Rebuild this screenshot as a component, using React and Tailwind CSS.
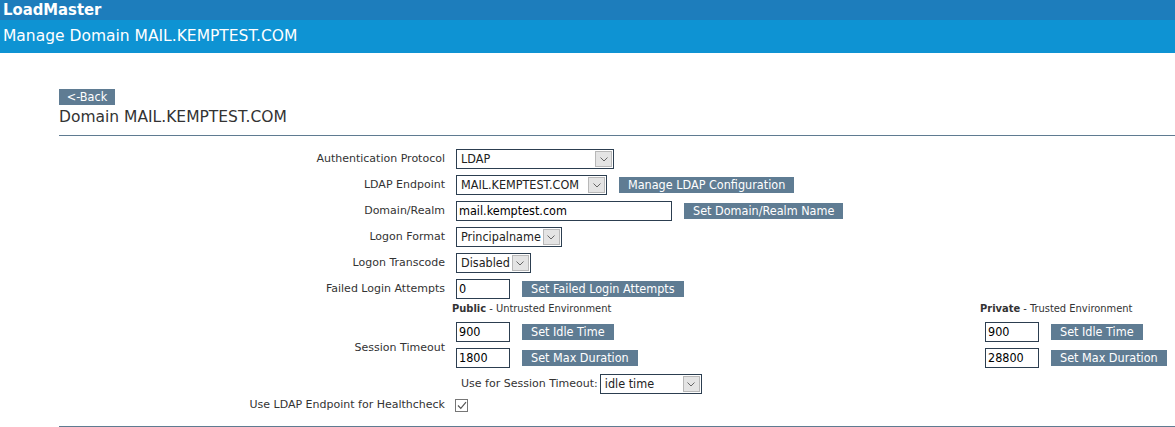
import React from "react";

const COND = "font-['DejaVu_Sans_Condensed','Open_Sans',sans-serif]";
const BTN = `flex h-4 items-center bg-[#5f7c93] px-[9px] text-[12.5px] leading-none text-white whitespace-nowrap ${COND}`;
const INPUT = `flex h-5 items-center border border-[#2c3e50] bg-white pl-[2px] text-[12.5px] leading-none text-black ${COND}`;

function Chevron() {
  return (
    <svg width="8" height="5" viewBox="0 0 8 5" fill="none">
      <path d="M0.5 0.5 L4 4 L7.5 0.5" stroke="#666" strokeWidth="1" />
    </svg>
  );
}

function Select({ value, width = "" }) {
  return (
    <div className={`flex h-5 items-center border border-[#2c3e50] bg-white ${width}`}>
      <span className={`flex-1 whitespace-nowrap pl-1 pr-[2px] text-[12.5px] leading-none text-[#222] ${COND}`}>{value}</span>
      <span className="mr-px flex h-4 w-[17px] items-center justify-center border border-[#b8b8b8] bg-[#e4e4e4]">
        <Chevron />
      </span>
    </div>
  );
}

function Row({ label, children }) {
  return (
    <div className="flex items-center gap-[11px]">
      <div className="w-[386px] text-right text-[11px] text-[#333]">{label}</div>
      <div className="flex items-center gap-3">{children}</div>
    </div>
  );
}

function EnvColumn({ name, desc, idle, max, className = "", headClass = "" }) {
  return (
    <div className={`flex flex-col gap-[6px] ${className}`}>
      <div className={`h-[14px] text-[11px] leading-[14px] text-[#333] ${COND} ${headClass}`}>
        <span className="font-bold">{name}</span> - {desc}
      </div>
      <div className="flex items-center gap-3">
        <div className={`${INPUT} w-[54px]`}>{idle}</div>
        <button className={BTN}>Set Idle Time</button>
      </div>
      <div className="flex items-center gap-3">
        <div className={`${INPUT} w-[54px]`}>{max}</div>
        <button className={BTN}>Set Max Duration</button>
      </div>
    </div>
  );
}

export default function App() {
  return (
    <div className="min-h-screen bg-white font-['DejaVu_Sans','Open_Sans',sans-serif]">
      <div className={`flex h-5 items-center bg-[#1d7dbc] pl-[3px] text-[16.5px] font-bold leading-none text-white ${COND}`}>
        LoadMaster
      </div>
      <div className="flex h-[33px] items-center bg-[#0e93d3] pl-[3px] text-[15.5px] leading-none text-white">
        Manage Domain MAIL.KEMPTEST.COM
      </div>

      <div className="pl-[59px] pt-9">
        <button className={`${BTN} w-14 justify-center px-0`}>&lt;-Back</button>
        <div className="mt-[3px] text-[15.5px] leading-[18px] text-[#333]">Domain MAIL.KEMPTEST.COM</div>
        <div className="mt-[9px] h-px bg-[#5f7b91]" />

        <div className="mt-[13px] flex flex-col gap-[6px]">
          <Row label="Authentication Protocol">
            <Select value="LDAP" width="w-[158px]" />
          </Row>
          <Row label="LDAP Endpoint">
            <Select value="MAIL.KEMPTEST.COM" width="w-[151px]" />
            <button className={BTN}>Manage LDAP Configuration</button>
          </Row>
          <Row label="Domain/Realm">
            <div className={`${INPUT} w-[216px]`}>mail.kemptest.com</div>
            <button className={BTN}>Set Domain/Realm Name</button>
          </Row>
          <Row label="Logon Format">
            <Select value="Principalname" />
          </Row>
          <Row label="Logon Transcode">
            <Select value="Disabled" />
          </Row>
          <Row label="Failed Login Attempts">
            <div className={`${INPUT} w-[54px]`}>0</div>
            <button className={BTN}>Set Failed Login Attempts</button>
          </Row>
        </div>

        <div className="mt-[3px] flex items-center gap-[11px]">
          <div className="w-[386px] text-right text-[11px] text-[#333]">Session Timeout</div>
          <div className="flex flex-col">
            <div className="flex">
              <EnvColumn name="Public" desc="Untrusted Environment" idle="900" max="1800" className="w-[529px]" headClass="-ml-1" />
              <EnvColumn name="Private" desc="Trusted Environment" idle="900" max="28800" headClass="-ml-[5px]" />
            </div>
            <div className="mt-[6px] flex items-center gap-[2px] pl-[5px]">
              <span className="text-[11px] text-[#333]">Use for Session Timeout:</span>
              <Select value="idle time" width="w-[102px]" />
            </div>
          </div>
        </div>

        <div className="mt-[3px] flex h-[17px] items-center gap-[10px]">
          <div className="w-[386px] text-right text-[11px] text-[#333]">Use LDAP Endpoint for Healthcheck</div>
          <div className="flex h-[13px] w-[13px] items-center justify-center border border-[#767676] bg-white">
            <svg width="10" height="9" viewBox="0 0 10 9" fill="none">
              <path d="M1 4.5 L3.8 7.3 L9 1.2" stroke="#555" strokeWidth="1.2" />
            </svg>
          </div>
        </div>

        <div className="mt-[12px] h-px bg-[#5f7b91]" />
      </div>
    </div>
  );
}
